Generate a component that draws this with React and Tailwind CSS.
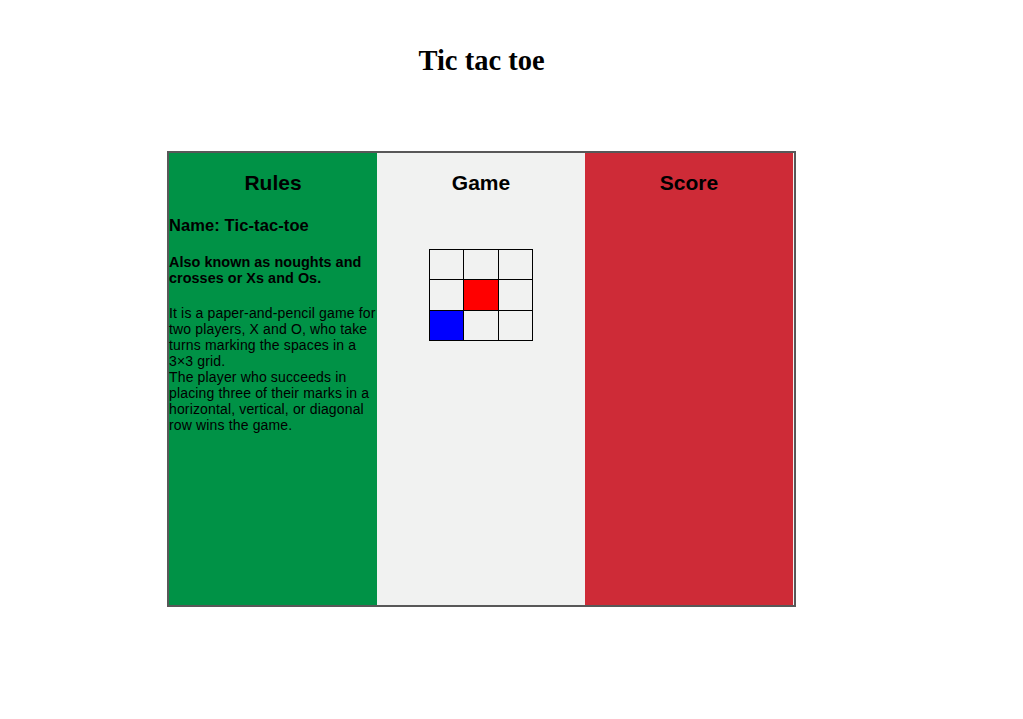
export default function App() {
  const cells = [
    'bg-[#f1f2f1]', 'bg-[#f1f2f1]', 'bg-[#f1f2f1]',
    'bg-[#f1f2f1]', 'bg-[#ff0000]', 'bg-[#f1f2f1]',
    'bg-[#0000ff]', 'bg-[#f1f2f1]', 'bg-[#f1f2f1]',
  ];

  return (
    <div className="min-h-[719px] bg-white pt-[44px] pl-[167px] font-['Liberation_Sans',Arial,sans-serif] text-black">
      <div className="w-[629px]">
        <h1 className="text-center font-['Liberation_Serif','Times_New_Roman',serif] text-[28.5px] font-bold leading-[33px]">
          Tic tac toe
        </h1>

        <div className="mt-[74px] flex h-[456px] border-2 border-[#585858] bg-[#f1f2f1]">
          {/* Rules */}
          <section className="w-[208px] bg-[#009246] pt-[18px]">
            <h2 className="text-center text-[21px] font-bold leading-[24px]">Rules</h2>
            <h3 className="mt-[19.5px] text-[16.5px] font-bold leading-[20px] tracking-[0.1px]">Name: Tic-tac-toe</h3>
            <h4 className="mt-[19.5px] text-[14.4px] font-bold leading-[16px] tracking-[0.05px]">
              Also known as noughts and
              <br />
              crosses or Xs and Os.
            </h4>
            <p className="mt-[19px] whitespace-nowrap text-[14px] leading-[16px] tracking-[0.15px]">
              It is a paper-and-pencil game for
              <br />
              two players, X and O, who take
              <br />
              turns marking the spaces in a
              <br />
              3×3 grid.
              <br />
              The player who succeeds in
              <br />
              placing three of their marks in a
              <br />
              horizontal, vertical, or diagonal
              <br />
              row wins the game.
            </p>
          </section>

          {/* Game */}
          <section className="w-[208px] bg-[#f1f2f1] pt-[18px]">
            <h2 className="text-center text-[21px] font-bold leading-[24px]">Game</h2>
            <div className="mx-auto mt-[54px] grid w-[104px] grid-cols-[33px_34px_33px] grid-rows-[29px_30px_29px] gap-px bg-black p-px">
              {cells.map((c, i) => (
                <div key={i} className={c} />
              ))}
            </div>
          </section>

          {/* Score */}
          <section className="w-[208px] bg-[#ce2b37] pt-[18px]">
            <h2 className="text-center text-[21px] font-bold leading-[24px]">Score</h2>
          </section>
        </div>
      </div>
    </div>
  );
}
